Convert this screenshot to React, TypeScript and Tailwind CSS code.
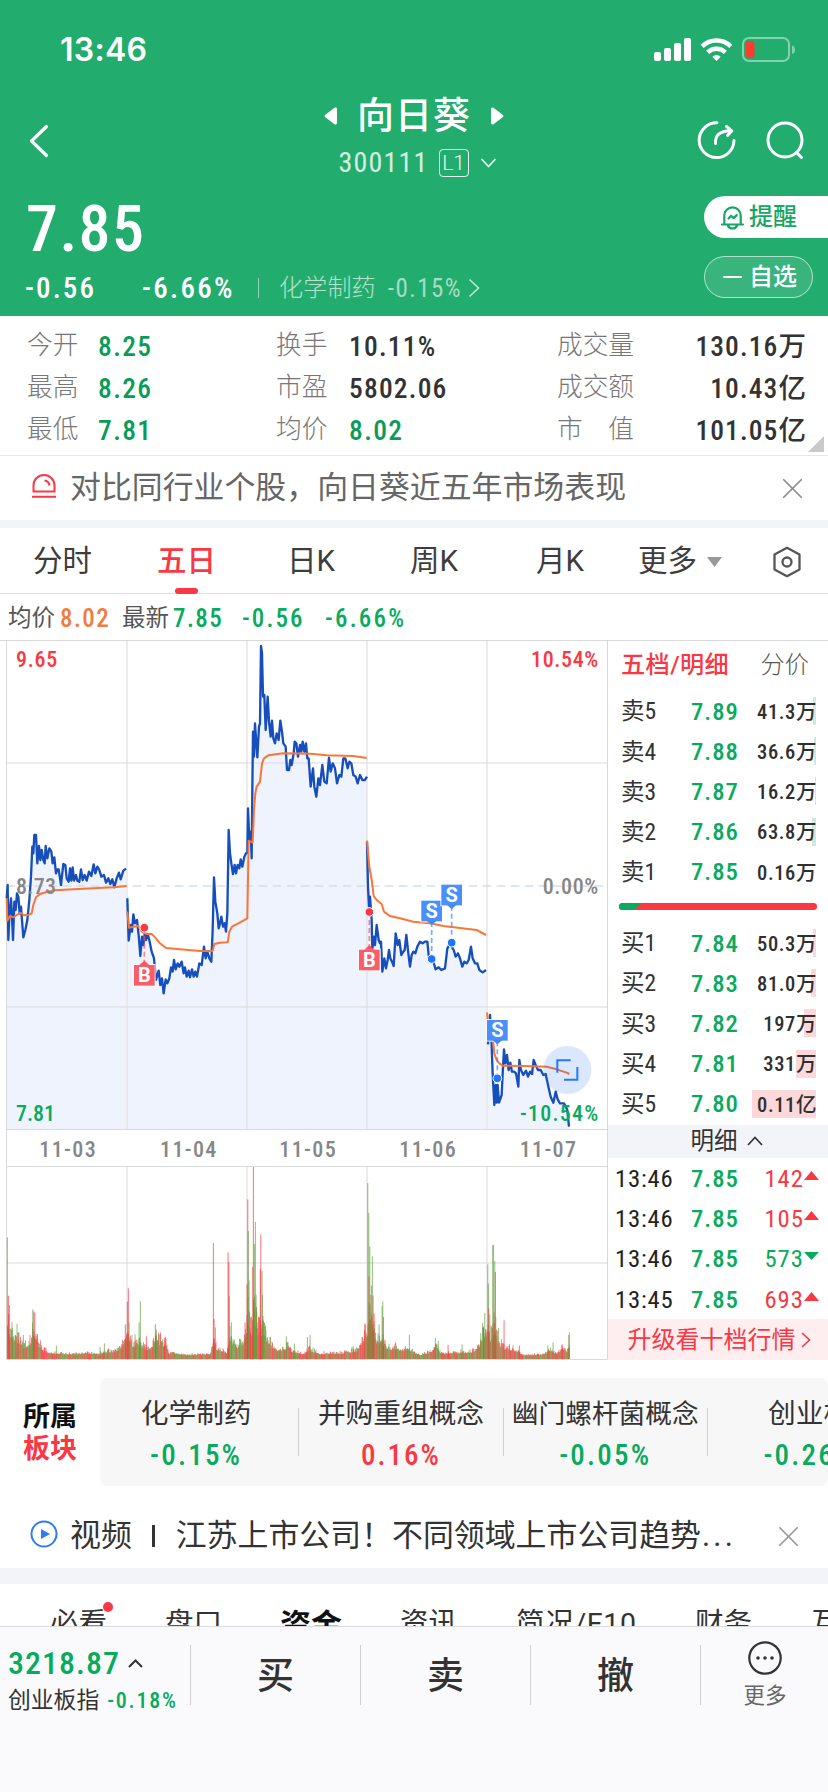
import { X } from 'lucide-react';
import type { ReactNode } from 'react';

type Point = [number, number];

interface Level {
  label: string;
  price: string;
  volume: string;
  bar: number;
}

interface Tick {
  time: string;
  price: string;
  volume: string;
  up: boolean;
}

const STATS = [
  [
    { label: '今开', value: '8.25', green: true },
    { label: '最高', value: '8.26', green: true },
    { label: '最低', value: '7.81', green: true },
  ],
  [
    { label: '换手', value: '10.11%', green: false },
    { label: '市盈', value: '5802.06', green: false },
    { label: '均价', value: '8.02', green: true },
  ],
];

const TOTALS = [
  { label: '成交量', value: '130.16', unit: '万' },
  { label: '成交额', value: '10.43', unit: '亿' },
  { label: '市　值', value: '101.05', unit: '亿' },
];

const SELLS: Level[] = [
  { label: '卖5', price: '7.89', volume: '41.3万', bar: 3 },
  { label: '卖4', price: '7.88', volume: '36.6万', bar: 2 },
  { label: '卖3', price: '7.87', volume: '16.2万', bar: 1 },
  { label: '卖2', price: '7.86', volume: '63.8万', bar: 4 },
  { label: '卖1', price: '7.85', volume: '0.16万', bar: 0 },
];

const BUYS: Level[] = [
  { label: '买1', price: '7.84', volume: '50.3万', bar: 3 },
  { label: '买2', price: '7.83', volume: '81.0万', bar: 5 },
  { label: '买3', price: '7.82', volume: '197万', bar: 12 },
  { label: '买4', price: '7.81', volume: '331万', bar: 20 },
  { label: '买5', price: '7.80', volume: '0.11亿', bar: 64 },
];

const TICKS: Tick[] = [
  { time: '13:46', price: '7.85', volume: '142', up: true },
  { time: '13:46', price: '7.85', volume: '105', up: true },
  { time: '13:46', price: '7.85', volume: '573', up: false },
  { time: '13:45', price: '7.85', volume: '693', up: true },
];

const BOARDS = [
  { name: '化学制药', change: '-0.15%', up: false },
  { name: '并购重组概念', change: '0.16%', up: true },
  { name: '幽门螺杆菌概念', change: '-0.05%', up: false },
  { name: '创业板', change: '-0.26%', up: false },
];

// Chart data, in thirds of a pixel
const PRICE_LINES = [
  '20,805 23,765 25,930 29,840 33,805 36,860 39,930 43,815 47,840 51,790 55,800 59,850 63,830 66,870 70,922 76,900 82,870 88,810 93,740 97,650 100,670 103,615 108,615 112,700 117,648 121,690 125,660 130,690 134,700 137,648 142,685 148,655 154,665 158,700 163,682 168,730 172,718 176,718 183,765 190,702 196,705 200,745 206,755 210,715 214,752 218,712 222,752 228,735 232,752 238,755 243,718 248,750 254,735 260,752 267,725 274,738 281,703 286,730 292,710 298,720 304,740 312,735 318,758 325,745 331,762 337,748 343,772 350,745 357,728 362,748 370,722 378,716',
  '382,805 386,932 392,885 396,905 400,853 405,880 411,870 416,915 421,978 426,920 430,945 434,912 438,930 443,912 448,930 455,965 462,985 468,1050 476,1022 481,1065 486,1045 491,1090 497,1048 502,1060 508,1045 513,1012 518,1025 522,990 527,1018 533,1000 538,1010 545,995 551,1030 555,1012 560,1040 566,1022 570,1042 576,1018 581,1040 586,1025 591,1040 598,1000 605,1005 612,950 617,985 622,965 628,985 634,995 638,900 642,742 646,815 652,850 656,895 660,880 664,860 669,890 674,880 678,905 682,850 686,600 690,670 694,700 699,732 704,705 708,730 713,705 718,715 722,688 727,710 733,680 738,670 742,668 744,535 748,630 752,605 755,685 757,480 759,305 762,380 765,280 768,325 772,382 777,290 780,280 783,48 786,70 789,200 793,195 797,300 803,200 807,275 812,320 816,272 820,325 825,340 830,310 836,330 841,272 846,305 850,340 857,350 861,420 867,420 871,390 875,405 881,370 884,335 889,340 894,380 900,345 904,365 908,335 913,365 918,340 922,385 926,385 932,470 939,415 943,470 949,500 955,445 960,465 967,405 973,455 980,460 987,383 992,425 998,400 1005,415 1011,460 1018,435 1024,440 1030,385 1036,385 1043,415 1048,395 1054,400 1060,435 1067,440 1073,460 1080,435 1087,450 1095,450 1101,440',
  '1101,635 1104,770 1107,830 1110,800 1115,870 1117,960 1121,920 1125,945 1130,885 1136,930 1140,940 1143,935 1147,1025 1153,985 1158,1015 1163,990 1167,960 1171,985 1176,995 1181,1008 1187,910 1193,945 1198,930 1204,975 1210,965 1214,960 1219,915 1225,970 1230,1010 1235,975 1240,965 1246,970 1252,950 1260,935 1268,940 1275,935 1282,935 1287,985 1294,987 1300,995 1307,1018 1316,1012 1324,1020 1335,1015 1342,955 1348,945 1355,950 1361,960 1367,980 1374,970 1380,985 1387,1010 1393,995 1400,1000 1406,990 1413,950 1418,985 1425,1000 1432,1000 1438,1020 1448,1027 1458,1020',
  '1464,1243 1467,1200 1470,1155 1474,1220 1478,1330 1483,1425 1487,1365 1490,1418 1493,1365 1497,1418 1505,1395 1508,1330 1512,1258 1516,1300 1521,1275 1526,1320 1531,1298 1536,1325 1542,1325 1548,1330 1555,1370 1558,1290 1563,1320 1570,1335 1578,1322 1584,1340 1590,1325 1596,1332 1601,1290 1607,1305 1614,1320 1622,1320 1630,1335 1637,1332 1644,1365 1652,1400 1660,1418 1667,1385 1673,1408 1680,1420 1692,1420 1702,1440 1707,1490',
];

const AVERAGE_LINES = [
  '20,805 22,872 30,858 40,862 50,855 62,848 72,856 85,855 95,850 100,825 108,802 120,792 140,786 165,781 250,776 340,772 380,768',
  '382,845 387,893 400,890 415,888 425,905 440,912 455,912 465,922 480,940 498,954 540,958 600,963 638,963 643,942 660,938 683,937 688,905 696,890 715,880 742,865 746,632 752,635 758,638 762,540 766,490 770,470 780,455 786,400 792,385 805,376 850,370 932,371 980,376 1060,378 1100,384',
  '1101,632 1108,710 1115,750 1121,798 1130,810 1145,822 1152,845 1170,858 1200,865 1240,875 1290,880 1330,888 1380,894 1430,900 1458,915',
  '1461,1147 1466,1200 1480,1240 1483,1270 1490,1290 1498,1300 1508,1307 1570,1308 1640,1310 1670,1318 1700,1328 1708,1332',
];

const VOLUME_BASE = 2187;

const VOLUME_ENVELOPE: Point[] = [
  [22, 150], [28, 100], [40, 85], [55, 70], [75, 45], [90, 60], [98, 100], [106, 90], [115, 50], [140, 16],
  [200, 12], [300, 14], [340, 24], [360, 34], [372, 60], [380, 110], [390, 70], [400, 45], [418, 70], [430, 35],
  [450, 30], [468, 85], [480, 60], [495, 50], [505, 16], [560, 8], [630, 12], [640, 60], [650, 30], [680, 14],
  [688, 90], [700, 50], [725, 50], [738, 100], [744, 180], [752, 90], [762, 200], [772, 120], [780, 110],
  [790, 110], [805, 60], [830, 30], [855, 30], [862, 50], [875, 22], [910, 12], [925, 30], [935, 25], [960, 14],
  [1030, 16], [1070, 28], [1092, 80], [1100, 100], [1106, 190], [1116, 150], [1128, 70], [1145, 75],
  [1160, 35], [1200, 30], [1225, 30], [1260, 8], [1285, 20], [1310, 45], [1320, 14], [1400, 18], [1425, 28],
  [1440, 60], [1456, 110], [1464, 110], [1472, 70], [1482, 120], [1495, 60], [1515, 35], [1550, 26], [1566, 8],
  [1620, 8], [1650, 26], [1670, 14], [1688, 36], [1700, 20], [1708, 50],
];

const VOLUME_SPIKES: [number, number, 'r' | 'g'][] = [
  [22, 365, 'g'], [25, 190, 'r'], [28, 162, 'r'], [37, 94, 'g'], [54, 80, 'r'], [70, 72, 'g'], [98, 149, 'g'],
  [101, 143, 'r'], [104, 139, 'r'], [169, 40, 'g'], [300, 36, 'g'], [313, 47, 'g'], [376, 104, 'r'], [382, 172, 'r'],
  [385, 212, 'r'], [387, 110, 'g'], [405, 74, 'g'], [417, 110, 'g'], [421, 173, 'g'], [439, 68, 'r'], [466, 104, 'r'],
  [469, 88, 'g'], [493, 63, 'r'], [640, 348, 'r'], [642, 120, 'r'], [646, 95, 'g'], [684, 320, 'r'], [686, 290, 'r'],
  [688, 188, 'g'], [694, 110, 'g'], [735, 110, 'r'], [741, 224, 'r'], [743, 479, 'r'], [745, 384, 'g'], [747, 236, 'g'],
  [751, 125, 'r'], [758, 276, 'r'], [760, 576, 'r'], [763, 345, 'g'], [766, 411, 'g'], [768, 192, 'g'], [770, 142, 'g'],
  [782, 374, 'r'], [781, 270, 'r'], [786, 264, 'g'], [787, 192, 'g'], [792, 108, 'g'], [859, 68, 'g'], [883, 46, 'g'],
  [922, 66, 'g'], [930, 72, 'g'], [1060, 38, 'g'], [1094, 106, 'r'], [1103, 528, 'g'], [1106, 438, 'g'],
  [1107, 248, 'r'], [1109, 337, 'g'], [1112, 192, 'g'], [1117, 308, 'g'], [1119, 190, 'r'], [1122, 136, 'r'],
  [1114, 220, 'g'], [1137, 104, 'g'], [1146, 158, 'g'], [1148, 173, 'g'], [1150, 126, 'r'], [1187, 50, 'r'],
  [1228, 72, 'g'], [1306, 63, 'g'], [1315, 55, 'g'], [1344, 42, 'r'], [1386, 44, 'g'], [1442, 78, 'g'],
  [1450, 98, 'r'], [1454, 138, 'g'], [1463, 284, 'g'], [1465, 226, 'g'], [1466, 152, 'r'], [1469, 134, 'g'],
  [1478, 342, 'g'], [1480, 342, 'g'], [1482, 140, 'r'], [1484, 294, 'g'], [1486, 261, 'r'], [1487, 126, 'g'],
  [1512, 116, 'r'], [1558, 40, 'r'], [1643, 40, 'g'], [1659, 50, 'g'], [1686, 44, 'r'], [1706, 72, 'g'], [1708, 80, 'g'],
];

const MARKERS = [
  { letter: 'B', x: 433, dot: 893, top: 1003 },
  { letter: 'B', x: 1108, dot: 846, top: 957 },
  { letter: 'S', x: 1295, dot: 987, top: 810 },
  { letter: 'S', x: 1355, dot: 938, top: 762 },
  { letter: 'S', x: 1492, dot: 1345, top: 1168 },
];

const AXIS_TEXT = [
  { text: '9.65', x: 48, y: 110, w: 124, fill: '#f93843' },
  { text: '8.73', x: 48, y: 792, w: 120, fill: '#868686' },
  { text: '7.81', x: 48, y: 1472, w: 117, fill: '#08ab5d' },
  { text: '10.54%', x: 1593, y: 110, w: 202, fill: '#f93843' },
  { text: '0.00%', x: 1628, y: 792, w: 167, fill: '#868686' },
  { text: '-10.54%', x: 1560, y: 1472, w: 235, fill: '#08ab5d' },
  { text: '11-03', x: 118, y: 1580, w: 169, fill: '#868686' },
  { text: '11-04', x: 480, y: 1580, w: 169, fill: '#868686' },
  { text: '11-05', x: 838, y: 1580, w: 169, fill: '#868686' },
  { text: '11-06', x: 1198, y: 1580, w: 169, fill: '#868686' },
  { text: '11-07', x: 1559, y: 1580, w: 169, fill: '#868686' },
];

function envelopeAt(x: number) {
  const i = VOLUME_ENVELOPE.findIndex(([px]) => px >= x);
  if (i <= 0) return VOLUME_ENVELOPE[0][1];
  const [x0, h0] = VOLUME_ENVELOPE[i - 1];
  const [x1, h1] = VOLUME_ENVELOPE[i];
  return h0 + ((h1 - h0) * (x - x0)) / (x1 - x0);
}

function buildVolume() {
  const bars: { x: number; h: number; red: boolean }[] = [];
  let seed = 17;
  const rand = () => {
    seed = (seed * 16807) % 2147483647;
    return seed / 2147483647;
  };
  for (let x = 21; x < 1708; x += 1.5) {
    const h = envelopeAt(x) * (0.5 + 0.8 * rand() * rand() + 0.15 * rand()) + 6;
    bars.push({ x, h, red: rand() > 0.47 });
  }
  return bars;
}

const VOLUME = buildVolume();

function areaOf(line: string) {
  const pts = line.split(' ');
  const first = pts[0].split(',')[0];
  const last = pts[pts.length - 1].split(',')[0];
  return `${first},1498 ${line} ${last},1498`;
}

function StatusIcons() {
  return (
    <svg width="142" height="26" viewBox="0 0 142 26">
      <g fill="#fff">
        <rect x="0" y="15" width="7" height="9" rx="2" />
        <rect x="10" y="11" width="7" height="13" rx="2" />
        <rect x="20" y="6" width="7" height="18" rx="2" />
        <rect x="30" y="1" width="7" height="23" rx="2" />
        <path d="M62.500 24l-4.200-4.300a6.200 6.200 0 0 1 8.400 0z" />
      </g>
      <g fill="none" stroke="#fff" strokeWidth="4.400">
        <path d="M48.200 9.300a20.500 20.500 0 0 1 28.600 0" />
        <path d="M53.600 15.300a12.800 12.800 0 0 1 17.800 0" />
      </g>
      <rect x="89" y="1" width="46" height="23" rx="6" fill="none" stroke="#fff" strokeOpacity=".45" strokeWidth="2" />
      <rect x="92" y="4" width="8.500" height="17" rx="3" fill="#ff3b30" />
      <path d="M138 8.500c4 1 4 7.500 0 8.500z" fill="#fff" fillOpacity=".45" />
    </svg>
  );
}

function Header() {
  return (
    <header className="h-[316px] bg-[#22ac6e] text-white">
      <div className="flex h-[99px] items-center justify-between pr-[32px] pl-[60px]">
        <span className="font-['Inter',sans-serif] text-[32px] leading-none font-semibold tracking-[0.3px]">13:46</span>
        <StatusIcons />
      </div>
      <div className="flex h-[85px] items-start pr-[22px] pl-[28px]">
        <svg className="mt-[25px] shrink-0" width="22" height="34" viewBox="0 0 22 34" fill="none" stroke="#fff" strokeWidth="3.200" strokeLinecap="round" strokeLinejoin="round">
          <path d="M18.500 2.500L3.500 17l15 14.500" />
        </svg>
        <div className="ml-[244px] flex w-[240px] flex-col items-center">
          <div className="mt-[-3px] flex h-[40px] items-center gap-[19px]">
            <svg width="14" height="18" viewBox="0 0 14 18"><path d="M1 8l9.500-7.300Q13 0 13 2v14q0 2-2.500 1.300L1 10q-1-1 0-2z" fill="#fff" /></svg>
            <span className="text-[37px] leading-none font-medium tracking-[1px]">向日葵</span>
            <svg width="14" height="18" viewBox="0 0 14 18"><path d="M13 8L3.500.7Q1 0 1 2v14q0 2 2.500 1.300L13 10q1-1 0-2z" fill="#fff" /></svg>
          </div>
          <div className="mt-[12px] ml-[7px] flex h-[30px] items-center">
            <span className="text-[28px] leading-none tracking-[1.2px] text-white/80">300111</span>
            <span className="ml-[10px] flex h-[28px] w-[30px] items-center justify-center rounded-[4px] border border-white/90 text-[21px] leading-none font-light text-white/90 [font-stretch:100%]">L1</span>
            <svg className="ml-[11px]" width="17" height="12" viewBox="0 0 17 12" fill="none" stroke="#fff" strokeOpacity=".9" strokeWidth="1.800"><path d="M1.500 2l7 7.500L15.500 2" /></svg>
          </div>
        </div>
        <div className="ml-auto flex gap-[27px] pt-[20px]">
          <svg width="42" height="42" viewBox="0 0 42 42" fill="none" stroke="#fff" strokeWidth="3" strokeLinecap="round" strokeLinejoin="round">
            <path d="M22 3.800A17.400 17.400 0 1 0 39 21.500" />
            <path d="M20.500 24.500c-.5-8 4-12.500 15-12.800M31.500 7.500l5.300 4.300-4.300 4.700" />
          </svg>
          <svg width="42" height="42" viewBox="0 0 42 42" fill="none" stroke="#fff" strokeWidth="3" strokeLinecap="round">
            <circle cx="21" cy="21" r="17" />
            <path d="M32.500 33.500l5 5" />
          </svg>
        </div>
      </div>
      <div className="flex h-[132px] justify-between">
        <div className="pl-[26px]">
          <div className="mt-[14px] text-[64px] leading-none font-medium tracking-[1.4px]">7.85</div>
          <div className="mt-[11px] ml-[-1px] flex h-[30px] items-center text-[29px] leading-none font-medium">
            <span className="w-[117px] tracking-[2.1px]">-0.56</span>
            <span className="w-[116px] tracking-[2.3px]">-6.66%</span>
            <span className="h-[20px] w-px bg-white/50" />
            <span className="ml-[20px] text-[24px] font-light tracking-[0.2px] text-white/65">化学制药</span>
            <span className="ml-[12px] text-[25px] font-normal tracking-[1.4px] text-white/60">-0.15%</span>
            <svg className="ml-[6px]" width="12" height="20" viewBox="0 0 12 20" fill="none" stroke="#fff" strokeOpacity=".7" strokeWidth="1.600"><path d="M1.500 1.500L10.500 10l-9 8.500" /></svg>
          </div>
        </div>
        <div className="flex w-[124px] flex-col gap-[18px] pt-[12px]">
          <button className="flex h-[42px] items-center rounded-l-full bg-white pl-[16px] text-[#16a765]">
            <svg width="25" height="25" viewBox="0 0 25 25" fill="none" stroke="#16a765" strokeWidth="2.200" strokeLinecap="round" strokeLinejoin="round">
              <path d="M2 19.500h21M4.300 19v-8.500a8.200 8.200 0 0 1 16.400 0V19M8 20.500c1.500 4 7.500 4 9 0M8.500 13.500l2.600-2.700 2.600 2.300 3-3" />
            </svg>
            <span className="ml-[4px] text-[24px] leading-none font-medium">提醒</span>
          </button>
          <button className="mr-[15px] flex h-[42px] items-center rounded-full border border-white/60 bg-white/10 pl-[18px]">
            <span className="h-[2.5px] w-[19px] rounded bg-white" />
            <span className="ml-[7px] text-[24px] leading-none font-medium">自选</span>
          </button>
        </div>
      </div>
    </header>
  );
}

function Stats() {
  return (
    <section className="relative flex h-[140px] border-b border-[#e8e8ea] pt-[8px] text-[27.5px] leading-none">
      {STATS.map((column, i) => (
        <div key={i} className={i === 0 ? 'w-[276px] pl-[27px]' : 'w-[281px]'}>
          {column.map((s) => (
            <div key={s.label} className="flex h-[42px] items-center pt-[1px]">
              <span className={i === 0 ? 'w-[71px] text-[25.7px] font-light text-[#777]' : 'w-[73px] text-[25.7px] font-light text-[#777]'}>{s.label}</span>
              <span className={s.green ? 'pt-[2px] font-medium tracking-[1.4px] text-[#0a9c57]' : 'pt-[2px] font-medium tracking-[1.2px] text-[#333]'}>{s.value}</span>
            </div>
          ))}
        </div>
      ))}
      <div className="flex-1 pr-[21px]">
        {TOTALS.map((t) => (
          <div key={t.label} className="flex h-[42px] items-center justify-between pt-[1px]">
            <span className="text-[25.7px] font-light text-[#777]">{t.label}</span>
            <span className="pt-[2px] font-medium tracking-[1.1px] text-[#333]">{t.value}{t.unit}</span>
          </div>
        ))}
      </div>
      <svg className="absolute right-[4px] bottom-[3px]" width="16" height="16"><path d="M0 16L16 0v16z" fill="#c9c9c9" /></svg>
    </section>
  );
}

function Notice() {
  return (
    <section className="flex h-[64px] items-center pr-[18px] pl-[31px]">
      <svg className="mb-[4px]" width="26" height="26" viewBox="0 0 26 26" fill="none" stroke="#f93843" strokeWidth="2">
        <path d="M2.500 18.500v-6a10.500 10.500 0 0 1 21 0v6zM1 23.800h24M13.500 7.500c2.500.3 4.500 2 5 5" />
      </svg>
      <span className="ml-[13px] text-[30.9px] leading-none text-[#666]">对比同行业个股，向日葵近五年市场表现</span>
      <X className="ml-auto text-[#8c8c8c]" size={35} strokeWidth={1.2} />
    </section>
  );
}

function PeriodTabs() {
  return (
    <nav className="flex h-[66px] items-center border-b border-[#dfdfe2] pt-[2px] pl-[33px] text-[29.5px] leading-none text-[#3d3d3d]">
      <span className="w-[124px]">分时</span>
      <span className="relative flex h-full w-[130px] items-center font-medium text-[#f93843]">
        五日
        <span className="absolute bottom-[-1px] left-[18px] h-[6px] w-[23px] rounded-full bg-[#f93843]" />
      </span>
      <span className="w-[123px] [font-stretch:100%]">日K</span>
      <span className="w-[126px] [font-stretch:100%]">周K</span>
      <span className="w-[102px] [font-stretch:100%]">月K</span>
      <span>更多</span>
      <svg className="ml-[10px]" width="15" height="10"><path d="M0 0h15L7.500 10z" fill="#999" /></svg>
      <svg className="ml-[49px]" width="32" height="32" viewBox="0 0 32 32" fill="none" stroke="#555" strokeWidth="2.300" strokeLinejoin="round">
        <path d="M16 1.800l12.500 6.700v15L16 30.200 3.500 23.500v-15z" />
        <circle cx="16" cy="16" r="4.500" />
      </svg>
    </nav>
  );
}

function QuoteLine() {
  return (
    <div className="flex h-[46px] items-center pt-[3px] pl-[8px] text-[25px] leading-none font-medium tracking-[1.4px] text-[#08ab5d]">
      <span className="w-[52px] text-[23.5px] font-normal tracking-normal text-[#555]">均价</span>
      <span className="w-[62px] text-[#ef7d42]">8.02</span>
      <span className="w-[51px] text-[23.5px] font-normal tracking-normal text-[#555]">最新</span>
      <span className="w-[69px]">7.85</span>
      <span className="w-[83px] tracking-[2.1px]">-0.56</span>
      <span className="tracking-[2.2px]">-6.66%</span>
    </div>
  );
}

function Marker({ letter, x, dot, top }: (typeof MARKERS)[number]) {
  const buy = letter === 'B';
  const fill = buy ? '#f85361' : '#3f88fb';
  const tip = buy ? top : top + 66;
  return (
    <g>
      <line x1={x} x2={x} y1={dot} y2={tip} stroke={fill} strokeOpacity=".7" strokeWidth="5" strokeDasharray="15 9" />
      <rect x={x - 34} y={top - 1} width="68" height="68" fill="#fff" fillOpacity=".85" />
      <path
        d={buy ? `M${x - 15} ${top + 2}l15-13 15 13z` : `M${x - 15} ${top + 62}l15 13 15-13z`}
        fill={fill}
      />
      <rect x={x - 31} y={top + 2} width="62" height="62" fill={fill} fillOpacity=".94" />
      <text x={x} y={top + 54} textAnchor="middle" fontSize="60" fontWeight="700" fill="#fff" className="[font-stretch:100%]">{letter}</text>
      <circle cx={x} cy={dot} r="13" fill={buy ? '#f93843' : '#1f75ff'} stroke="#fff" strokeWidth="3" />
    </g>
  );
}

function Chart() {
  return (
    <svg className="shrink-0" width="608" height="720" viewBox="0 30 1824 2160">
      {PRICE_LINES.map((line) => (
        <polygon key={line} points={areaOf(line)} fill="#eff3fe" />
      ))}
      <g stroke="#dcdcdc" strokeOpacity=".55" strokeWidth="6">
        <path d="M20 399H1822M20 1131H1822M20 1899H1822" />
        <path d="M381 32V1498M741 32V1498M1101 32V1498M1461 32V1498" />
        <path d="M381 1610V2187M741 1610V2187M1101 1610V2187M1461 1610V2187" />
      </g>
      <path d="M20 768H1812" stroke="#d5dfe9" strokeWidth="5" strokeDasharray="26 16" />
      <path d="M0 31.500H1824M19.500 31V2189M1822.500 31V2189M19 1498.500H1822M19 1609.500H1822M19 2188.500H1822" fill="none" stroke="#d9d9d9" strokeWidth="3" />
      {VOLUME.map((b) => (
        <rect key={b.x} x={b.x} y={VOLUME_BASE - b.h} width="3" height={b.h} fill={b.red ? '#fb2f38' : '#5a9e38'} fillOpacity=".62" />
      ))}
      {VOLUME_SPIKES.map(([x, h, c], i) => (
        <rect key={i} x={x - 1.5} y={VOLUME_BASE - h} width="3.5" height={h} fill={c === 'r' ? '#fb2f38' : '#5a9e38'} fillOpacity=".58" />
      ))}
      <g fill="none" strokeLinejoin="round">
        {PRICE_LINES.map((line) => (
          <polyline key={line} points={line} stroke="#164fbb" strokeWidth="7" />
        ))}
        {AVERAGE_LINES.map((line) => (
          <polyline key={line} points={line} stroke="#fc7436" strokeWidth="6" />
        ))}
      </g>
      <g fontSize="66" fontWeight="500">
        {AXIS_TEXT.map((t) => (
          <text key={t.text} x={t.x} y={t.y} textLength={t.w} fill={t.fill}>{t.text}</text>
        ))}
      </g>
      {MARKERS.map((m) => (
        <Marker key={m.x} {...m} />
      ))}
      <circle cx="1702" cy="1320" r="72" fill="#2b70f0" fillOpacity=".17" />
      <path d="M1672 1328v-37h40M1732 1311v38h-40" fill="none" stroke="#2478ff" strokeWidth="6" />
    </svg>
  );
}

function LevelRow({ level, sell }: { level: Level; sell: boolean }) {
  return (
    <div className="relative flex h-[40.2px] shrink-0 items-center pr-[11px] pl-[13px] leading-none">
      <span
        className={sell ? 'absolute top-[5px] right-[12px] h-[28px] bg-[#cdeadb]' : 'absolute top-[5px] right-[12px] h-[28px] bg-[#fdd8db]'}
        style={{ width: level.bar }}
      />
      <span className="w-[70px] text-[23.5px] text-[#333]">{level.label}</span>
      <span className="text-[24.7px] font-medium tracking-[1px] text-[#08ab5d]">{level.price}</span>
      <span className="relative ml-auto text-[20.5px] font-medium tracking-[0.6px] text-[#2f2f2f]">{level.volume}</span>
    </div>
  );
}

function OrderBook() {
  return (
    <aside className="flex h-[720px] flex-1 flex-col border-t border-[#d9d9d9]">
      <div className="flex h-[51px] shrink-0 items-center justify-between pr-[19px] pb-[3px] pl-[13px] text-[24.2px] leading-none text-[#555]">
        <span className="font-medium tracking-[0.4px] text-[#f93843] [font-stretch:100%]">五档/明细</span>
        <span className="font-light">分价</span>
      </div>
      {SELLS.map((l) => (
        <LevelRow key={l.label} level={l} sell />
      ))}
      <div className="mt-[10px] mb-[14px] ml-[11px] flex h-[7px] w-[198px] shrink-0 overflow-hidden rounded-full bg-[#f93843]">
        <svg width="24" height="7"><path d="M0 0h23l-8 7H0z" fill="#08ab5d" /></svg>
      </div>
      {BUYS.map((l) => (
        <LevelRow key={l.label} level={l} sell={false} />
      ))}
      <div className="flex h-[33px] shrink-0 items-center justify-center gap-[9px] bg-[#f3f4f9] pl-[17px] text-[23.5px] leading-none text-[#333]">
        明细
        <svg width="16" height="10" viewBox="0 0 16 10" fill="none" stroke="#333" strokeWidth="1.700"><path d="M1 9l7-7.500L15 9" /></svg>
      </div>
      {TICKS.map((t, i) => (
        <div key={i} className="flex h-[40.2px] shrink-0 items-center pt-[3px] pr-[9px] pl-[7px] text-[24.7px] leading-none">
          <span className="w-[76px] tracking-[0.8px] text-[#222]">{t.time}</span>
          <span className="font-medium tracking-[1px] text-[#08ab5d]">{t.price}</span>
          <span className={t.up ? 'ml-auto tracking-[1px] text-[#f93843]' : 'ml-auto tracking-[1px] text-[#08ab5d]'}>{t.volume}</span>
          <svg className="mb-[8px]" width="15" height="9">
            <path d={t.up ? 'M0 9L7.500 0 15 9z' : 'M0 1h15L7.500 9z'} fill={t.up ? '#f93843' : '#08ab5d'} />
          </svg>
        </div>
      ))}
      <div className="flex flex-1 items-center justify-center gap-[5px] bg-[#ffeef0] pt-[1px] pl-[2px] text-[24px] leading-none text-[#f93843]">
        升级看十档行情
        <svg width="10" height="16" viewBox="0 0 10 16" fill="none" stroke="#f93843" strokeWidth="1.600"><path d="M1 1l7.500 7L1 15" /></svg>
      </div>
    </aside>
  );
}

function Boards() {
  return (
    <section className="flex h-[144px] pt-[18px]">
      <div className="flex h-[108px] w-[100px] flex-col justify-center gap-[5px] pt-[3px] pl-[23px] text-[27px] leading-none font-bold">
        <span className="text-[#111]">所属</span>
        <span className="text-[#f93843]">板块</span>
      </div>
      <div className="flex h-[108px] flex-1 overflow-hidden rounded-lg bg-[#f7f7f8]">
        <div className="ml-[-6px] flex">
          {BOARDS.map((b, i) => (
            <div key={b.name} className="flex w-[204.300px] shrink-0 items-center">
              {i > 0 && <span className="h-[48px] w-px bg-[#cfcfcf]" />}
              <div className="flex flex-1 flex-col items-center pt-[5px] whitespace-nowrap">
                <span className={i === 2 ? 'text-[26.7px] leading-[28px] text-[#333]' : 'text-[27.7px] leading-[28px] text-[#333]'}>{b.name}</span>
                <span className={b.up ? 'mt-[13px] text-[29px] leading-none font-medium tracking-[2px] text-[#f93843]' : 'mt-[13px] text-[29px] leading-none font-medium tracking-[2.2px] text-[#08ab5d]'}>{b.change}</span>
              </div>
            </div>
          ))}
        </div>
      </div>
    </section>
  );
}

function VideoRow() {
  return (
    <section className="flex h-[64px] items-center pr-[22px] pl-[30px]">
      <svg className="mb-[4px] shrink-0" width="28" height="28" viewBox="0 0 28 28">
        <circle cx="14" cy="14" r="12.500" fill="none" stroke="#2f7bf6" strokeWidth="2" />
        <path d="M11 9l9 5-9 5z" fill="#2f7bf6" />
      </svg>
      <span className="ml-[12px] flex items-center text-[30.9px] leading-none whitespace-nowrap text-[#333]">
        视频
        <span className="mr-[21px] ml-[20px] h-[22px] w-[3px] bg-[#333]" />
        江苏上市公司！不同领域上市公司趋势
        <span className="ml-[1px] tracking-[3.2px] [font-stretch:100%]">...</span>
      </span>
      <X className="ml-auto text-[#999]" size={35} strokeWidth={1.2} />
    </section>
  );
}

function InfoTab({ className, children }: { className: string; children: ReactNode }) {
  return <span className={`shrink-0 whitespace-nowrap ${className}`}>{children}</span>;
}

function InfoTabs() {
  return (
    <nav className="flex h-[42px] overflow-hidden pt-[26px] pl-[50px] text-[28.5px] leading-none text-[#333]">
      <InfoTab className="relative w-[115px]">
        必看
        <span className="absolute top-[-8px] left-[53px] h-[10px] w-[10px] rounded-full bg-[#f93843]" />
      </InfoTab>
      <InfoTab className="w-[115px]">盘口</InfoTab>
      <InfoTab className="w-[120px] text-[31px] font-bold text-[#111]">资金</InfoTab>
      <InfoTab className="w-[116px]">资讯</InfoTab>
      <InfoTab className="w-[179px] tracking-[0.7px] [font-stretch:100%]">简况/F10</InfoTab>
      <InfoTab className="w-[116px]">财务</InfoTab>
      <InfoTab className="">互动</InfoTab>
    </nav>
  );
}

function BottomBar() {
  return (
    <footer className="flex h-[166px] border-t border-[#dcdce0] bg-[#fafafc] pt-[18px] leading-none">
      <div className="w-[190px] pl-[8px]">
        <div className="flex items-center pt-[2px] text-[32px] font-medium tracking-[1px] text-[#08ab5d]">
          3218.87
          <svg className="ml-[8px]" width="15" height="9" viewBox="0 0 15 9" fill="none" stroke="#333" strokeWidth="2"><path d="M1 8l6.500-6.500L14 8" /></svg>
        </div>
        <div className="mt-[11px] flex items-center text-[22.8px] text-[#333]">
          创业板指
          <span className="ml-[8px] text-[22px] font-medium tracking-[1.8px] text-[#08ab5d]">-0.18%</span>
        </div>
      </div>
      {['买', '卖', '撤'].map((name) => (
        <button key={name} className="flex h-[60px] w-[170px] items-center justify-center border-l border-[#cfcfd2] pt-[2px] text-[37px] font-medium text-[#333]">{name}</button>
      ))}
      <div className="h-[60px] w-px bg-[#cfcfd2]" />
      <div className="flex flex-1 flex-col items-center pl-[1px]">
        <svg className="mt-[-5px] shrink-0" width="36" height="36" viewBox="0 0 36 36">
          <circle cx="18" cy="18" r="15.700" fill="none" stroke="#333" strokeWidth="2.200" />
          <g fill="#333"><circle cx="11" cy="18" r="1.800" /><circle cx="18" cy="18" r="1.800" /><circle cx="25" cy="18" r="1.800" /></g>
        </svg>
        <span className="mt-[9px] text-[21.5px] text-[#666]">更多</span>
      </div>
    </footer>
  );
}

export default function App() {
  return (
    <div className="h-[1792px] w-[828px] overflow-hidden bg-white font-['Roboto','Noto_Sans_CJK_SC',sans-serif] [font-stretch:75%]">
      <Header />
      <Stats />
      <Notice />
      <div className="h-[8px] bg-[#f3f4f9]" />
      <PeriodTabs />
      <QuoteLine />
      <div className="flex h-[720px]">
        <Chart />
        <OrderBook />
      </div>
      <Boards />
      <VideoRow />
      <div className="h-[16px] bg-[#f3f4f9]" />
      <InfoTabs />
      <BottomBar />
    </div>
  );
}
